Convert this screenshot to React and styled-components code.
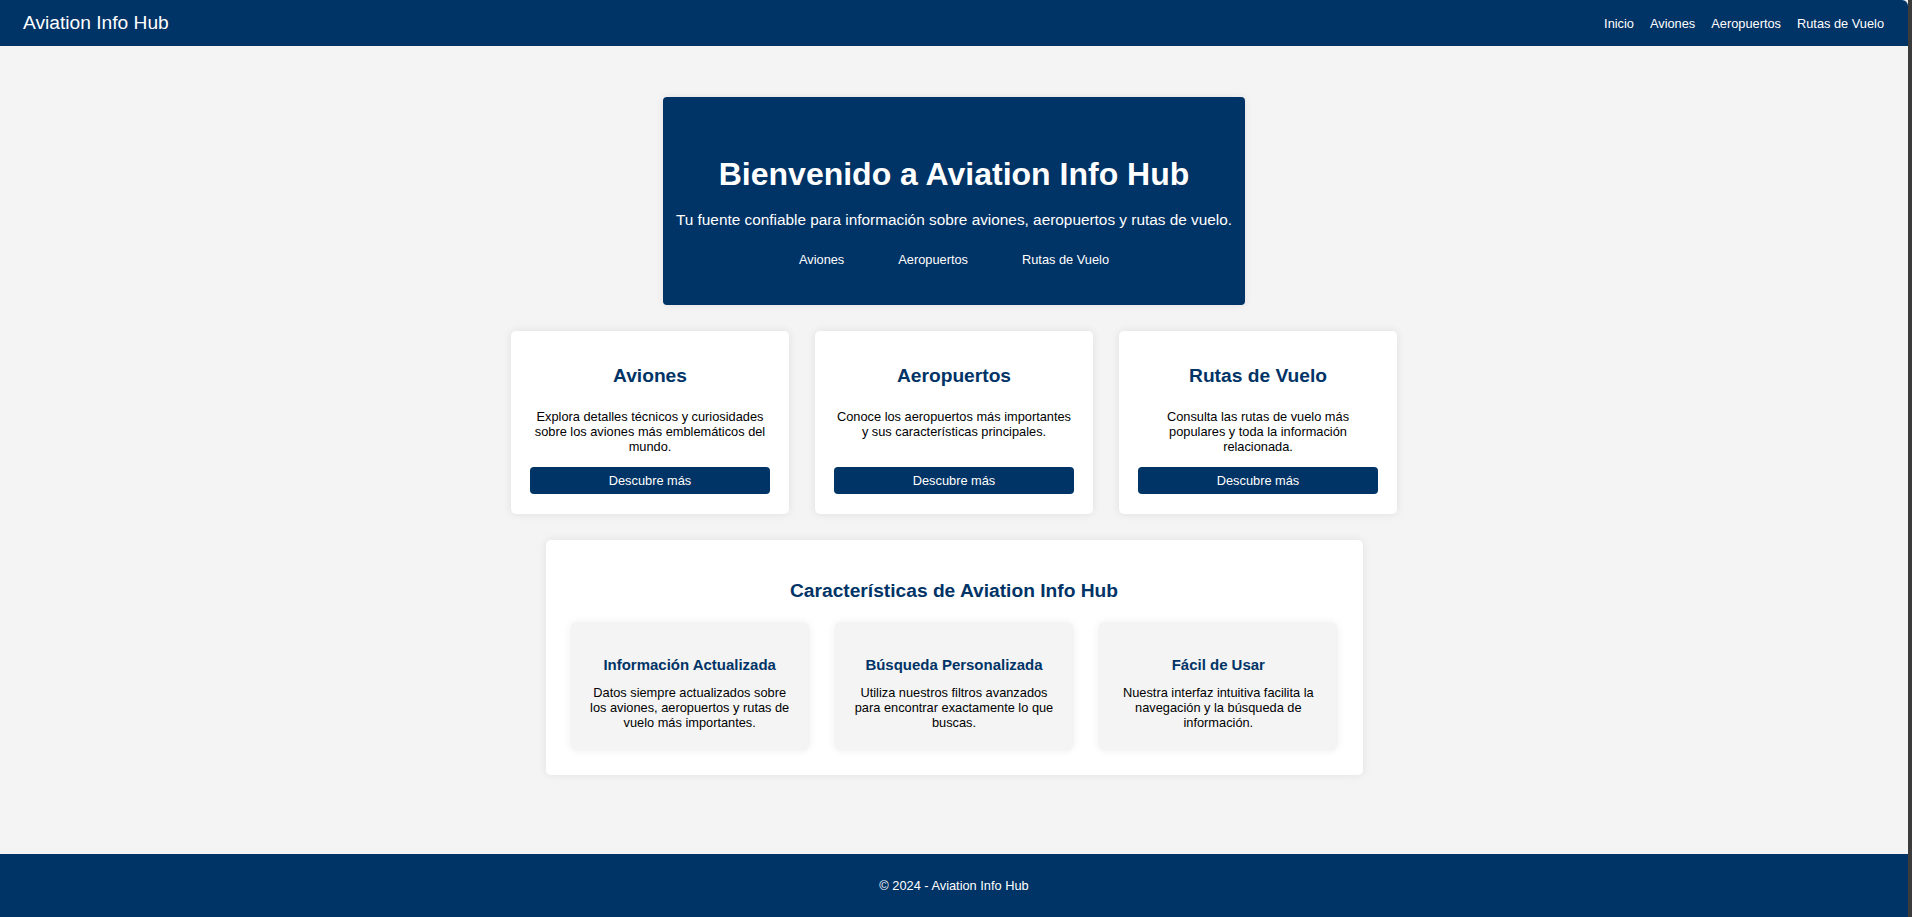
import React from "react"
import styled, { createGlobalStyle } from "styled-components"

const navy = "#003366"

const GlobalStyle = createGlobalStyle`
  html, body {
    margin: 0;
    padding: 0;
    background: #3b3b3b;
  }
  body {
    font-family: "Liberation Sans", Arial, sans-serif;
  }
  * {
    box-sizing: border-box;
  }
`

const Page = styled.div`
  width: calc(100% - 4px);
  min-height: 100vh;
  display: flex;
  flex-direction: column;
  background: #f4f4f4;
`

const NavBar = styled.header`
  background: ${navy};
  color: white;
  display: flex;
  justify-content: space-between;
  align-items: center;
  padding: 12px 24px 12px 23px;
  border-top-right-radius: 6px;
`

const Brand = styled.div`
  font-size: 19.2px;
  line-height: 22px;
`

const NavLinks = styled.nav`
  display: flex;
  gap: 16px;
`

const NavLink = styled.a`
  color: white;
  text-decoration: none;
  font-size: 12.8px;
`

const Main = styled.main`
  flex: 1;
  display: flex;
  flex-direction: column;
  align-items: center;
  gap: 26px;
  padding: 51px 0 78px;
`

const Hero = styled.section`
  width: 582px;
  background: ${navy};
  color: white;
  text-align: center;
  border-radius: 4px;
  padding: 59px 12px 38px;
  box-shadow: 0 0 8px rgba(0, 0, 0, 0.08);
`

const HeroTitle = styled.h1`
  font-size: 32px;
  line-height: 36.8px;
  margin: 0 0 18px;
`

const HeroText = styled.p`
  font-size: 15.36px;
  margin: 0 0 23px;
`

const HeroLinks = styled.div`
  display: flex;
  justify-content: center;
  gap: 54px;
`

const HeroLink = styled.a`
  color: white;
  text-decoration: none;
  font-size: 12.8px;
`

const CardRow = styled.div`
  display: flex;
  gap: 26px;
`

const Card = styled.div`
  width: 278px;
  display: flex;
  flex-direction: column;
  background: white;
  border-radius: 5px;
  padding: 19.2px;
  text-align: center;
  box-shadow: 0 0 10px rgba(0, 0, 0, 0.09);
`

const CardTitle = styled.h2`
  color: ${navy};
  font-size: 19.2px;
  line-height: 22px;
  margin: 15px 0 22px;
`

const CardText = styled.p`
  flex: 1;
  font-size: 12.8px;
  line-height: 15px;
  color: #000;
  margin: 0 0 13px;
`

const Button = styled.button`
  width: 100%;
  background: ${navy};
  color: white;
  border: none;
  border-radius: 4px;
  font-family: inherit;
  font-size: 12.8px;
  line-height: 15px;
  padding: 6px 0 6.4px;
  cursor: pointer;
`

const Features = styled.section`
  width: 817px;
  background: white;
  border-radius: 5px;
  padding: 24px;
  text-align: center;
  box-shadow: 0 0 10px rgba(0, 0, 0, 0.08);
`

const FeaturesTitle = styled.h2`
  color: ${navy};
  font-size: 19.2px;
  line-height: 22px;
  margin: 16px 0 20.7px;
`

const FeatureGrid = styled.div`
  display: grid;
  grid-template-columns: repeat(3, 1fr);
  gap: 24px;
`

const Feature = styled.div`
  background: #f4f4f4;
  border-radius: 8px;
  padding: 20px;
  font-size: 12.8px;
  box-shadow: 0 0 10px rgba(0, 0, 0, 0.06);
`

const FeatureTitle = styled.h3`
  color: ${navy};
  font-size: 14.98px;
  line-height: 17px;
  margin: 14px 0 12px;
`

const FeatureText = styled.p`
  line-height: 15px;
  margin: 0 0 1px;
`

const Footer = styled.footer`
  background: ${navy};
  color: white;
  text-align: center;
  font-size: 12.8px;
  line-height: 15px;
  padding: 24px;
`

const cards = [
  {
    title: "Aviones",
    text: "Explora detalles técnicos y curiosidades sobre los aviones más emblemáticos del mundo.",
  },
  {
    title: "Aeropuertos",
    text: "Conoce los aeropuertos más importantes y sus características principales.",
  },
  {
    title: "Rutas de Vuelo",
    text: "Consulta las rutas de vuelo más populares y toda la información relacionada.",
  },
]

const features = [
  {
    title: "Información Actualizada",
    text: "Datos siempre actualizados sobre los aviones, aeropuertos y rutas de vuelo más importantes.",
  },
  {
    title: "Búsqueda Personalizada",
    text: "Utiliza nuestros filtros avanzados para encontrar exactamente lo que buscas.",
  },
  {
    title: "Fácil de Usar",
    text: "Nuestra interfaz intuitiva facilita la navegación y la búsqueda de información.",
  },
]

const App = () => (
  <>
    <GlobalStyle />
    <Page>
      <NavBar>
        <Brand>Aviation Info Hub</Brand>
        <NavLinks>
          <NavLink href="#">Inicio</NavLink>
          <NavLink href="#">Aviones</NavLink>
          <NavLink href="#">Aeropuertos</NavLink>
          <NavLink href="#">Rutas de Vuelo</NavLink>
        </NavLinks>
      </NavBar>

      <Main>
        <Hero>
          <HeroTitle>Bienvenido a Aviation Info Hub</HeroTitle>
          <HeroText>
            Tu fuente confiable para información sobre aviones, aeropuertos y rutas de vuelo.
          </HeroText>
          <HeroLinks>
            <HeroLink href="#">Aviones</HeroLink>
            <HeroLink href="#">Aeropuertos</HeroLink>
            <HeroLink href="#">Rutas de Vuelo</HeroLink>
          </HeroLinks>
        </Hero>

        <CardRow>
          {cards.map(card => (
            <Card key={card.title}>
              <CardTitle>{card.title}</CardTitle>
              <CardText>{card.text}</CardText>
              <Button>Descubre más</Button>
            </Card>
          ))}
        </CardRow>

        <Features>
          <FeaturesTitle>Características de Aviation Info Hub</FeaturesTitle>
          <FeatureGrid>
            {features.map(f => (
              <Feature key={f.title}>
                <FeatureTitle>{f.title}</FeatureTitle>
                <FeatureText>{f.text}</FeatureText>
              </Feature>
            ))}
          </FeatureGrid>
        </Features>
      </Main>

      <Footer>© 2024 - Aviation Info Hub</Footer>
    </Page>
  </>
)

export default App
